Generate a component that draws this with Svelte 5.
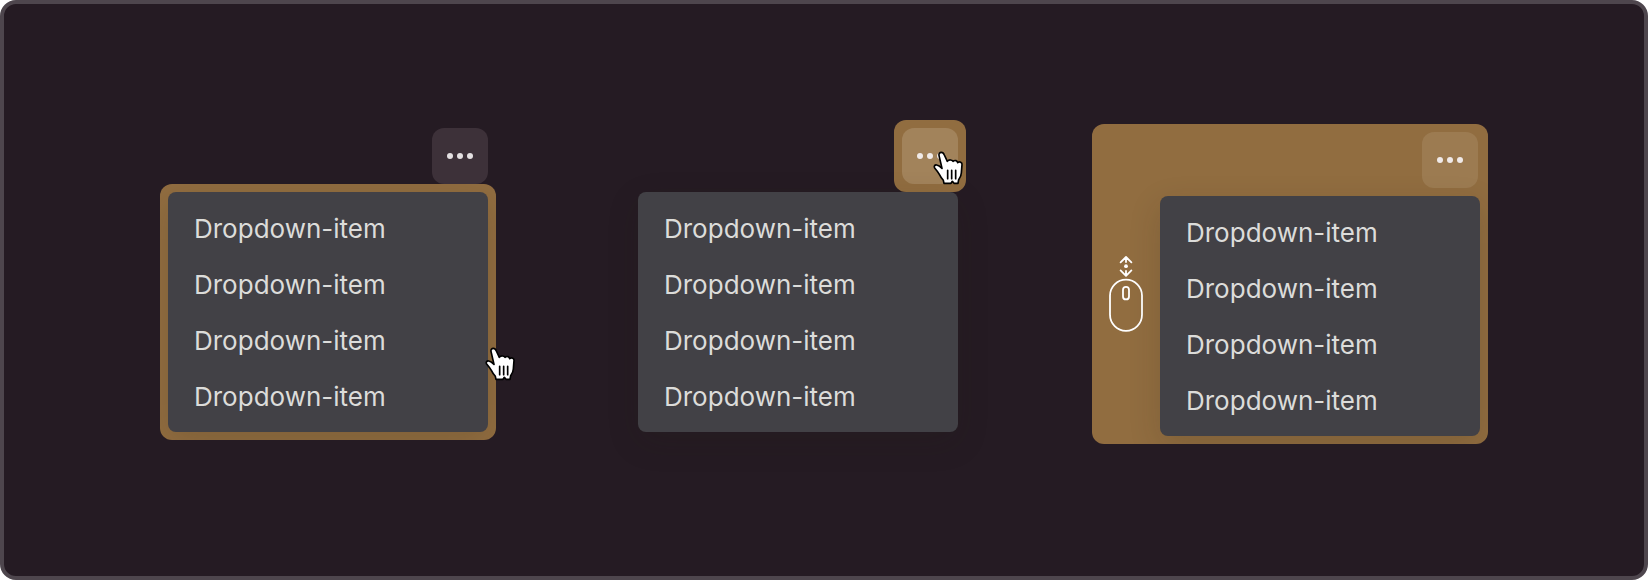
<script>
  const scenes = [
    { name: 'menu', hand: true },
    { name: 'trigger', hand: true },
    { name: 'region', mouse: true }
  ];
  const items = ['Dropdown-item', 'Dropdown-item', 'Dropdown-item', 'Dropdown-item'];
</script>

<main class="board">
  {#each scenes as scene}
    <section class="scene {scene.name}">
      <div class="trigger-wrap">
        <button class="more" aria-label="More">
          <span class="dot"></span><span class="dot"></span><span class="dot"></span>
        </button>
      </div>
      <div class="body">
        {#if scene.mouse}
          <svg class="mouse" width="36" height="80" viewBox="0 0 36 80" fill="none" stroke="#fff" stroke-width="1.8" stroke-linecap="round" stroke-linejoin="round">
            <path d="M12.6 7.4 18 2l5.4 5.4M18 2.5V7M12.6 15.4 18 20.8l5.4-5.4M18 20V16" />
            <circle cx="18" cy="11.2" r="1.9" fill="#fff" stroke="none" />
            <rect x="2" y="24.6" width="32" height="51.2" rx="16" />
            <rect x="15" y="31.8" width="6" height="12.6" rx="3" />
          </svg>
        {/if}
        <div class="menu-wrap">
          <ul class="list">
            {#each items as item}
              <li>{item}</li>
            {/each}
          </ul>
        </div>
      </div>
      {#if scene.hand}
        <svg class="hand" width="34" height="40" viewBox="0 0 102 120">
          <path d="M28 7C23 7 20 11 21 16L30 55C25 50 20 46 14 45C8 44 5 49 8 54C13 60 18 66 22 73C26 81 30 86 34 91L36 100H57L61 94L66 100H78L80 89C85 82 88 76 88 69L90 44C91 37 83 33 77 38C76 32 69 29 63 34C60 29 51 28 46 34L37 15C35 10 32 7 28 7Z" fill="#fff" stroke="#000" stroke-width="5" stroke-linejoin="round" />
          <path d="M47 61V86M59 61V86M71 61V86" stroke="#000" stroke-width="5" stroke-linecap="round" />
        </svg>
      {/if}
    </section>
  {/each}
</main>

<style>
  :global(body) { margin: 0; background: #fff; }
  .board {
    box-sizing: border-box;
    width: 1648px;
    height: 580px;
    padding: 116px 0 0 156px;
    display: flex;
    align-items: flex-start;
    background: #251b23;
    border: 4px solid #4e464d;
    border-radius: 16px;
    font-family: Inter, sans-serif;
  }
  .scene { position: relative; display: flex; flex-direction: column; }
  .menu { width: 336px; padding-top: 8px; margin-right: 142px; }
  .trigger { width: 328px; margin-right: 126px; }
  .region {
    box-sizing: border-box;
    width: 396px;
    height: 320px;
    margin-top: 4px;
    padding: 8px;
    border-radius: 12px;
    background: #916d40;
    overflow: hidden;
  }
  .trigger-wrap { align-self: flex-end; }
  .menu .trigger-wrap { padding-right: 8px; }
  .trigger .trigger-wrap { padding: 8px; border-radius: 12px; background: #916d40; }
  .region .trigger-wrap { padding: 0 2px 8px 0; }
  .more {
    width: 56px;
    height: 56px;
    padding: 0;
    border: 0;
    border-radius: 12px;
    display: flex;
    align-items: center;
    justify-content: center;
    gap: 4px;
    background: #3d3139;
  }
  .trigger .more { background: #a2835b; }
  .region .more { background: #9c7b51; }
  .dot { width: 6px; height: 6px; border-radius: 50%; background: #f0eae8; }
  .menu .dot { background: #e4e0e2; }
  .body { display: flex; }
  .menu .menu-wrap { padding: 8px; border-radius: 12px; background: #916d40; overflow: hidden; }
  .mouse { margin: 59px 16px 0 8px; flex: none; }
  .list {
    box-sizing: border-box;
    width: 320px;
    height: 240px;
    margin: 0;
    padding: 9px 0 7px;
    list-style: none;
    border-radius: 8px;
    background: #424146;
    box-shadow: 0 10px 32px rgba(40, 28, 18, 0.16);
  }
  li {
    height: 56px;
    padding-left: 26px;
    line-height: 56px;
    font-size: 26px;
    font-weight: 400;
    color: #dcdcda;
    white-space: nowrap;
  }
  .hand { position: absolute; }
  .menu .hand { left: 324px; top: 226px; }
  .trigger .hand { left: 294px; top: 30px; }
</style>
